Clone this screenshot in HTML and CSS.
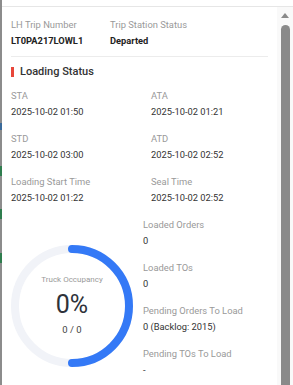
FILE: index.html
```html
<!DOCTYPE html>
<html>
<head>
<meta charset="utf-8">
<link rel="stylesheet" href="styles.css">
</head>
<body>
<div class="frame">
  <div class="edge"></div>
  <div class="main">
    <div class="topgap"></div>
    <div class="body">
      <div class="content">
        <div class="trip">
          <div class="field first">
            <div class="label">LH Trip Number</div>
            <div class="value strong">LT0PA217LOWL1</div>
          </div>
          <div class="field">
            <div class="label">Trip Station Status</div>
            <div class="value strong">Departed</div>
          </div>
        </div>
        <div class="divider"></div>
        <div class="heading"><span class="mark"></span>Loading Status</div>
        <div class="grid">
          <div class="field"><div class="label">STA</div><div class="value">2025-10-02 01:50</div></div>
          <div class="field"><div class="label">ATA</div><div class="value">2025-10-02 01:21</div></div>
          <div class="field"><div class="label">STD</div><div class="value">2025-10-02 03:00</div></div>
          <div class="field"><div class="label">ATD</div><div class="value">2025-10-02 02:52</div></div>
          <div class="field"><div class="label">Loading Start Time</div><div class="value">2025-10-02 01:22</div></div>
          <div class="field"><div class="label">Seal Time</div><div class="value">2025-10-02 02:52</div></div>
        </div>
        <div class="lower">
          <div class="donut-col">
            <div class="donut">
              <svg width="122" height="122" viewBox="0 0 122 122">
                <circle cx="61" cy="61" r="57" fill="none" stroke="#f1f3f8" stroke-width="8"/>
                <path d="M61 4 A57 57 0 0 1 61 118" fill="none" stroke="#3479f6" stroke-width="8" stroke-linecap="round"/>
              </svg>
              <div class="donut-text">
                <div class="d-label">Truck Occupancy</div>
                <div class="d-pct">0%</div>
                <div class="d-ratio">0 / 0</div>
              </div>
            </div>
          </div>
          <div class="list">
            <div class="field"><div class="label">Loaded Orders</div><div class="value">0</div></div>
            <div class="field"><div class="label">Loaded TOs</div><div class="value">0</div></div>
            <div class="field"><div class="label">Pending Orders To Load</div><div class="value">0 (Backlog: 2015)</div></div>
            <div class="field"><div class="label">Pending TOs To Load</div><div class="value">-</div></div>
          </div>
        </div>
      </div>
      <div class="scrollbar">
        <div class="arrow"></div>
        <div class="thumb"></div>
      </div>
    </div>
  </div>
</div>
</body>
</html>
```
FILE: styles.css
```css
* { box-sizing: border-box; }
html, body { margin: 0; padding: 0; background: #fff; }
body { font-family: Roboto, "Liberation Sans", sans-serif; color: #333; }

.frame {
  width: 293px;
  height: 385px;
  overflow: hidden;
  display: flex;
}
.edge {
  width: 2px;
  flex: none;
  background: linear-gradient(to bottom,
    #8c8c8c 0, #8c8c8c 123px,
    #3a6a9a 123px, #3a6a9a 130px,
    #8c8c8c 130px, #8c8c8c 166px,
    #2f7d4e 166px, #2f7d4e 176px,
    #8c8c8c 176px, #8c8c8c 209px,
    #2f7d4e 209px, #2f7d4e 219px,
    #8c8c8c 219px, #8c8c8c 253px,
    #2f7d4e 253px, #2f7d4e 263px,
    #8c8c8c 263px, #8c8c8c 100%);
}
.main {
  flex: 1;
  display: flex;
  flex-direction: column;
  min-width: 0;
}
.topgap {
  height: 7px;
  flex: none;
  border-bottom: 1px solid #e6e6e6;
}
.body {
  flex: 1;
  display: flex;
  min-height: 0;
}
.content {
  flex: 1;
  padding: 10px 9px 0 9px;
  min-width: 0;
}

.field { height: 32px; }
.label {
  font-size: 9.4px;
  line-height: 16px;
  color: #999;
  white-space: nowrap;
}
.value {
  font-size: 9.3px;
  line-height: 16px;
  color: #333;
  white-space: nowrap;
}
.value.strong { font-weight: 700; color: #222; }

.trip { display: flex; }
.trip .first { width: 99px; flex: none; }

.divider {
  height: 1px;
  background: #ececec;
  margin-top: 7px;
}
.heading {
  margin-top: 7px;
  font-size: 11px;
  line-height: 16px;
  font-weight: 500;
  color: #333;
  display: flex;
  align-items: center;
}
.mark {
  width: 3px;
  height: 10px;
  background: #e8463a;
  margin-right: 6px;
}

.grid {
  margin-top: 8px;
  display: grid;
  grid-template-columns: 140px 1fr;
  row-gap: 11px;
}

.lower {
  margin-top: 11px;
  display: flex;
}
.donut-col {
  width: 132px;
  flex: none;
  padding-top: 28px;
}
.donut {
  position: relative;
  width: 122px;
  height: 122px;
}
.donut svg { display: block; }
.donut-text {
  position: absolute;
  inset: 0;
  padding-top: 30px;
  display: flex;
  flex-direction: column;
  align-items: center;
}
.d-label {
  font-size: 8px;
  line-height: 10px;
  color: #9a9a9a;
}
.d-pct {
  margin-top: 6px;
  font-size: 25px;
  line-height: 28px;
  color: #2e323a;
}
.d-ratio {
  margin-top: 4.5px;
  font-size: 9.5px;
  line-height: 12px;
  color: #444;
}
.list {
  display: flex;
  flex-direction: column;
  gap: 11px;
}

.scrollbar {
  width: 16px;
  flex: none;
  background: #f9f9f9;
  display: flex;
  flex-direction: column;
  align-items: center;
  padding-top: 6px;
}
.arrow {
  width: 0;
  height: 0;
  border-left: 4px solid transparent;
  border-right: 4px solid transparent;
  border-bottom: 5px solid #8a8a8a;
}
.thumb {
  margin-top: 7px;
  width: 9px;
  flex: 1;
  background: #8a8a8a;
  border-radius: 5px 5px 0 0;
}
```
